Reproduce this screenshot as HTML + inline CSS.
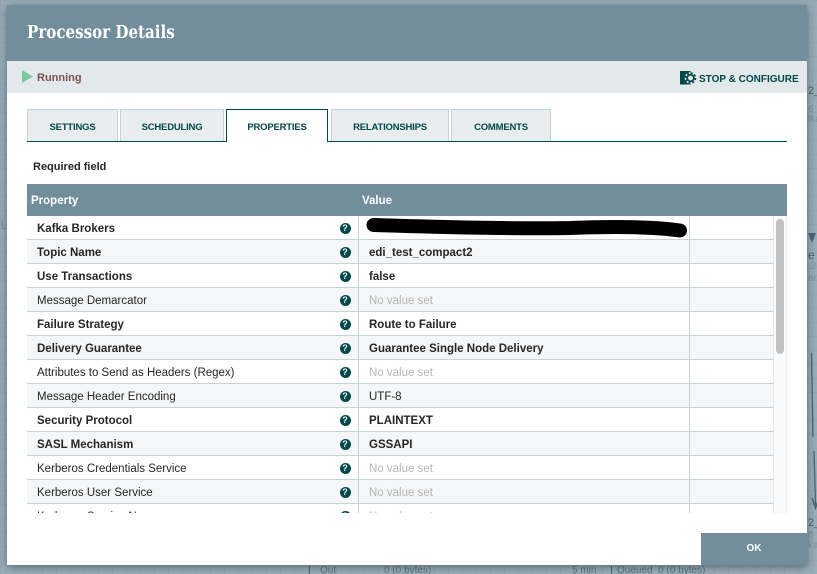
<!DOCTYPE html>
<html><head><meta charset="utf-8"><style>
*{box-sizing:border-box}
html,body{margin:0;padding:0;overflow:hidden;width:817px;height:574px}
body{position:relative;background:#8ea3ae;font-family:"Liberation Sans",sans-serif;color:#262626}
.a{position:absolute;white-space:nowrap}
#bg{left:0;top:0;width:817px;height:574px;background-color:#9aadb7;background-image:linear-gradient(#93a7b1 1px,transparent 1px),linear-gradient(90deg,#93a7b1 1px,transparent 1px);background-size:14px 14px}
#dlg{left:7px;top:5px;width:800px;height:560px;background:#fff;box-shadow:0 2px 8px rgba(30,50,60,.55)}
#hd{left:7px;top:5px;width:800px;height:56px;background:#728e9b;color:#fff;font:bold 17.5px/56px "DejaVu Serif",serif;padding-left:20px}
#hd span{display:inline-block;transform:scaleX(.862);transform-origin:left center}
#st{left:7px;top:61px;width:800px;height:32px;background:#e3e8eb}
.tab{top:109px;height:33px;background:#e9edef;border:1px solid #c7d2d7;border-bottom:0;font:bold 9.5px/35px "Liberation Sans",sans-serif;color:#004849;text-align:center;letter-spacing:-.2px}
.tab.on{background:#fff;border:1px solid #004849;border-bottom:0;height:33px;z-index:2}
#tl{left:27px;top:141px;width:760px;height:1px;background:#004849}
#th{left:27px;top:184px;width:760px;height:32px;background:#728e9b;color:#fff;font:bold 11.5px/34px "Liberation Sans",sans-serif}
#tb{left:27px;top:216px;width:760px;height:297px;overflow:hidden}
.r{position:absolute;left:0;width:746px;height:24px;border-bottom:1px solid #c7d2d7;font:11.5px/27px "Liberation Sans",sans-serif}
.r.e{background:#f4f6f7}
.r b,.r span,.r i{position:absolute;top:0;font-style:normal;white-space:nowrap}
.p{left:10px}.v{left:342px}
.n{color:#b5b5b5}
.r .c1{left:331px;top:0;width:1px;height:24px;background:#c7d2d7}
.r .c2{left:662px;top:0;width:1px;height:24px;background:#c7d2d7}
.r .q{left:312.5px;top:6.5px;width:11px;height:11px;border-radius:50%;background:#004849;color:#fff;font:bold 9px/11px "Liberation Sans",sans-serif;text-align:center}
#sb{left:773px;top:216px;width:14px;height:297px;background:#fafafa;border-left:1px solid #e6e6e6;border-right:1px solid #eee}
#th2{left:776px;top:219px;width:8px;height:135px;background:#c1c1c1;border-radius:4px}
#ok{left:701px;top:533px;width:106px;height:32px;background:#728e9b;color:#fff;font:bold 10px/32px "Liberation Sans",sans-serif;text-align:center}
.bgt{color:#5e7480;font-size:10px;line-height:10px}
</style></head><body>
<div class="a" id="bg"></div>
<div class="a bgt" style="left:320px;top:566px">Out</div>
<div class="a bgt" style="left:384px;top:566px">0 (0 bytes)</div>
<div class="a bgt" style="left:572px;top:566px">5 min</div>
<div class="a bgt" style="left:617px;top:566px">Queued&nbsp; 0 (0 bytes)</div>
<div class="a" style="left:611px;top:566px;width:1px;height:8px;background:#4a6470"></div>
<div class="a" style="left:309px;top:566px;width:1px;height:8px;background:#4a6470"></div>
<div class="a bgt" style="left:808px;top:86px;font-size:11px;color:#4a6470">2_</div>
<div class="a bgt" style="left:808px;top:105px;color:#7d929d">6</div>
<div class="a bgt" style="left:808px;top:115px;color:#7d929d">lka</div>
<div class="a bgt" style="left:808px;top:250px;font-size:12px;color:#4a6470">e</div>
<div class="a bgt" style="left:808px;top:262px;color:#7d929d">.2</div>
<div class="a bgt" style="left:808px;top:274px;color:#7d929d">an</div>
<div class="a bgt" style="left:808px;top:518px;font-size:11px;color:#4a6470">2_</div>
<div class="a bgt" style="left:808px;top:531px;color:#7d929d">6 1</div>
<div class="a bgt" style="left:808px;top:541px;color:#7d929d">kaf</div>
<div class="a bgt" style="left:1px;top:221px;font-size:11px;color:#7d929d">L</div>
<svg class="a" style="left:806px;top:225px" width="11" height="290" viewBox="0 0 11 290"><path d="M2 8L6 18L10 8Z" fill="#4a6470"/><path d="M5.5 128L7 212M8 226L9.5 280" fill="none" stroke="#4a6470" stroke-width="1.3"/><path d="M6 273L9.5 283L13 273" fill="none" stroke="#4a6470" stroke-width="1.5"/></svg>
<div class="a" id="dlg"></div>
<div class="a" id="hd"><span>Processor Details</span></div>
<div class="a" id="st"></div>
<svg class="a" style="left:22px;top:70px" width="12" height="13" viewBox="0 0 12 13"><path d="M0 0L11 6.5L0 13Z" fill="#7dc7a0"/></svg>
<div class="a" style="left:37px;top:71px;font:bold 11px/14px 'Liberation Sans',sans-serif;color:#775351">Running</div>
<svg class="a" style="left:680px;top:71px" width="17" height="14" viewBox="0 0 17 14"><path d="M0 0H10.5V13.5H0Z" fill="#004849"/><circle cx="10.5" cy="7" r="5.8" fill="#e3e8eb"/><circle cx="10.5" cy="7" r="4.8" fill="none" stroke="#004849" stroke-width="2" stroke-dasharray="2 1.77"/><circle cx="10.5" cy="7" r="3.3" fill="none" stroke="#004849" stroke-width="1.7"/></svg>
<div class="a" style="left:699px;top:72px;font:bold 10px/15px 'Liberation Sans',sans-serif;color:#004849">STOP &amp; CONFIGURE</div>
<div class="a tab" style="left:27px;width:91px">SETTINGS</div>
<div class="a tab" style="left:120px;width:104px">SCHEDULING</div>
<div class="a tab on" style="left:226px;width:102px">PROPERTIES</div>
<div class="a tab" style="left:331px;width:118px">RELATIONSHIPS</div>
<div class="a tab" style="left:451px;width:100px">COMMENTS</div>
<div class="a" id="tl"></div>
<div class="a" style="left:33px;top:160px;font:bold 11px/14px 'Liberation Sans',sans-serif;color:#262626">Required field</div>
<div class="a" id="th"><span class="a" style="left:4px;top:0">Property</span><span class="a" style="left:335px;top:0">Value</span></div>
<div class="a" id="tb">
<div class="r" style="top:0"><b class="p">Kafka Brokers</b><i class="q">?</i><i class="c1"></i><i class="c2"></i></div>
<div class="r e" style="top:24px"><b class="p">Topic Name</b><i class="q">?</i><i class="c1"></i><b class="v">edi_test_compact2</b><i class="c2"></i></div>
<div class="r" style="top:48px"><b class="p">Use Transactions</b><i class="q">?</i><i class="c1"></i><b class="v">false</b><i class="c2"></i></div>
<div class="r e" style="top:72px"><span class="p">Message Demarcator</span><i class="q">?</i><i class="c1"></i><span class="v n">No value set</span><i class="c2"></i></div>
<div class="r" style="top:96px"><b class="p">Failure Strategy</b><i class="q">?</i><i class="c1"></i><b class="v">Route to Failure</b><i class="c2"></i></div>
<div class="r e" style="top:120px"><b class="p">Delivery Guarantee</b><i class="q">?</i><i class="c1"></i><b class="v">Guarantee Single Node Delivery</b><i class="c2"></i></div>
<div class="r" style="top:144px"><span class="p">Attributes to Send as Headers (Regex)</span><i class="q">?</i><i class="c1"></i><span class="v n">No value set</span><i class="c2"></i></div>
<div class="r e" style="top:168px"><span class="p">Message Header Encoding</span><i class="q">?</i><i class="c1"></i><span class="v">UTF-8</span><i class="c2"></i></div>
<div class="r" style="top:192px"><b class="p">Security Protocol</b><i class="q">?</i><i class="c1"></i><b class="v">PLAINTEXT</b><i class="c2"></i></div>
<div class="r e" style="top:216px"><b class="p">SASL Mechanism</b><i class="q">?</i><i class="c1"></i><b class="v">GSSAPI</b><i class="c2"></i></div>
<div class="r" style="top:240px"><span class="p">Kerberos Credentials Service</span><i class="q">?</i><i class="c1"></i><span class="v n">No value set</span><i class="c2"></i></div>
<div class="r e" style="top:264px"><span class="p">Kerberos User Service</span><i class="q">?</i><i class="c1"></i><span class="v n">No value set</span><i class="c2"></i></div>
<div class="r" style="top:288px"><span class="p">Kerberos Service Name</span><i class="q">?</i><i class="c1"></i><span class="v n">No value set</span><i class="c2"></i></div>
</div>
<svg class="a" style="left:360px;top:216px" width="330" height="24" viewBox="0 0 330 24"><path d="M13.5 9C80 11 150 13 210 12C260 10 295 11 320 14.5" fill="none" stroke="#000" stroke-width="14" stroke-linecap="round"/></svg>
<div class="a" id="sb"></div>
<div class="a" id="th2"></div>
<div class="a" id="ok">OK</div>
</body></html>
